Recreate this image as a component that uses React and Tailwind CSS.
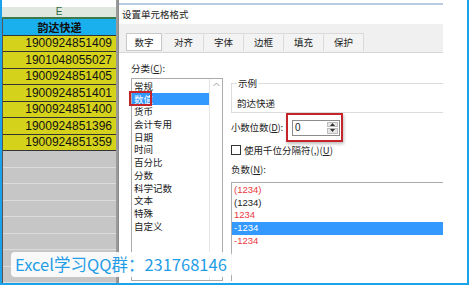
import React from 'react';

const cells = [
  '1900924851409',
  '1901048055027',
  '1900924851405',
  '1900924851401',
  '1900924851400',
  '1900924851396',
  '1900924851359',
];

const categories = ['常规', '数值', '货币', '会计专用', '日期', '时间', '百分比', '分数', '科学记数', '文本', '特殊', '自定义'];

const negatives = [
  { text: '(1234)', color: 'text-[#e8383d]' },
  { text: '(1234)', color: 'text-[#222]' },
  { text: '1234', color: 'text-[#e8383d]' },
  { text: '-1234', color: 'text-white', selected: true },
  { text: '-1234', color: 'text-[#e8383d]' },
];

const tabs = ['数字', '对齐', '字体', '边框', '填充', '保护'];

const Sheet = () => (
  <div className="w-[116px] h-full flex flex-col bg-white border-r-2 border-[#9a9a9a] font-['Liberation_Sans','Noto_Sans_CJK_SC',sans-serif]">
    <div className="h-[10px] bg-white" />
    <div className="h-[15px] bg-[#dfe7df] border-b-2 border-[#3c7a4e] flex items-center justify-center text-[10px] text-[#2f6b3f] leading-none">
      E
    </div>
    <div className="border-l border-[#555]">
      <div className="h-[16.5px] bg-[#1ab0ee] border-b border-[#333] flex items-center justify-center text-[11px] font-bold text-[#111] font-['Noto_Sans_CJK_SC',sans-serif]">
        韵达快递
      </div>
      {cells.map((n, i) => (
        <div key={i} className="h-[16.5px] bg-[#d5d21c] border-b border-[#333] flex items-center justify-end pr-[4px] text-[12px] text-[#111]">
          {n}
        </div>
      ))}
      {Array.from({ length: 8 }).map((_, i) => (
        <div key={i} className="h-[16.5px] bg-[#c6c6c6] border-b border-[#dcdcdc]" />
      ))}
    </div>
  </div>
);

const Dialog = () => (
  <div className="w-[325px] h-full flex flex-col bg-white border-l border-[#8a8a8a] text-[9.5px] text-[#222] font-['Noto_Sans_CJK_SC',sans-serif] overflow-hidden">
    <div className="h-[24px] relative">
      <div className="absolute top-[3px] left-0 right-0 h-[2px] bg-[#b9cbe2]" />
      <div className="pl-[3px] pt-[8px] leading-[12px]">设置单元格格式</div>
    </div>
    <div className="h-[29px] bg-[#f0f0f0] border-b border-[#d6d6d6] flex items-end pl-[7px]">
      {tabs.map((t, i) =>
        i === 0 ? (
          <div key={t} className="w-[36px] h-[18px] mb-[1px] mr-[2px] bg-white border border-[#c8c8c8] flex items-center justify-center">
            {t}
          </div>
        ) : (
          <div key={t} className="w-[40px] h-[18px] mb-[1px] bg-[#f3f3f3] border-r border-t border-[#dadada] flex items-center justify-center">
            {t}
          </div>
        )
      )}
    </div>
    <div className="flex-1 flex pl-[12px] pt-[9px] gap-[8px]">
      <div className="w-[92px] flex flex-col">
        <div className="leading-[12px] h-[16px]">分类(<span className="underline">C</span>):</div>
        <div className="flex-1 border border-[#ababab] flex mb-[2px]">
          <div className="flex-1 pt-[1px]">
            {categories.map((c, i) => (
              <div
                key={c}
                className={
                  'relative h-[12.7px] leading-[12.7px] pl-[2px] ' +
                  (i === 1 ? 'bg-[#3399ff] text-white' : '')
                }
              >
                {c}
                {i === 1 && (
                  <div className="absolute left-[-3px] top-[-2px] w-[23px] h-[15px] border-2 border-[#c3252b]" />
                )}
              </div>
            ))}
          </div>
          <div className="w-[13px] border-l border-[#e6e6e6] flex justify-center pt-[3px]">
            <svg width="7" height="5" viewBox="0 0 7 5">
              <path d="M0.5 4 L3.5 1 L6.5 4" fill="none" stroke="#a0a0a0" strokeWidth="1" />
            </svg>
          </div>
        </div>
      </div>
      <div className="flex-1 flex flex-col pt-[16px]">
        <fieldset className="h-[35px] border-t border-l border-b border-[#dcdcdc] pl-[5px]">
          <legend className="px-[1px] leading-[10px]">示例</legend>
          <div className="pt-[9px] leading-[12px]">韵达快递</div>
        </fieldset>
        <div className="flex items-center h-[29px]">
          <div className="w-[55px] whitespace-nowrap tracking-[-0.2px]">小数位数(<span className="underline">D</span>):</div>
          <div className="w-[57px] h-[29px] border-2 border-[#c3252b] shadow-[1px_2px_3px_rgba(0,0,0,0.25)] flex items-center pl-[4px]">
            <div className="w-[48px] h-[16px] border border-[#8c8c8c] flex items-center justify-between">
              <span className="pl-[2px] text-[10px] leading-none font-['Liberation_Sans',sans-serif]">0</span>
              <div className="w-[13px] h-full flex flex-col gap-[1px] p-[1px]">
                <div className="flex-1 bg-[#e6e6e6] border border-[#bdbdbd] flex items-center justify-center">
                  <svg width="5" height="3" viewBox="0 0 5 3"><path d="M0 3 L2.5 0 L5 3 Z" fill="#333" /></svg>
                </div>
                <div className="flex-1 bg-[#e6e6e6] border border-[#bdbdbd] flex items-center justify-center">
                  <svg width="5" height="3" viewBox="0 0 5 3"><path d="M0 0 L2.5 3 L5 0 Z" fill="#333" /></svg>
                </div>
              </div>
            </div>
          </div>
        </div>
        <div className="flex items-center h-[16px]">
          <div className="w-[10px] h-[10px] border border-[#333] bg-white mr-[3px]" />
          <span>使用千位分隔符(,)(<span className="underline">U</span>)</span>
        </div>
        <div className="h-[23px] flex items-center">负数(<span className="underline">N</span>):</div>
        <div className="flex-1 border-t border-l border-[#ababab] pt-[1px] mt-[1px] mb-[2px] font-['Liberation_Sans',sans-serif]">
          {negatives.map((n, i) => (
            <div
              key={i}
              className={
                'h-[12.7px] leading-[12.7px] pl-[2px] ' + n.color + (n.selected ? ' bg-[#3399ff]' : '')
              }
            >
              {n.text}
            </div>
          ))}
        </div>
      </div>
    </div>
  </div>
);

export default function App() {
  return (
    <div className="relative w-[469px] h-[285px] bg-white border-l-2 border-r-2 border-b-2 border-[#1aa3ea] flex overflow-hidden">
      <Sheet />
      <Dialog />
      <div className="flex-1 bg-white" />
      <div className="absolute left-[9px] top-[252px] w-[221px] h-[25px] bg-white/90 rounded-[4px] flex items-center pl-[4px] text-[16.5px] text-[#1f9de6] leading-none font-['Noto_Sans_CJK_SC',sans-serif]">
        Excel学习QQ群：231768146
      </div>
    </div>
  );
}
